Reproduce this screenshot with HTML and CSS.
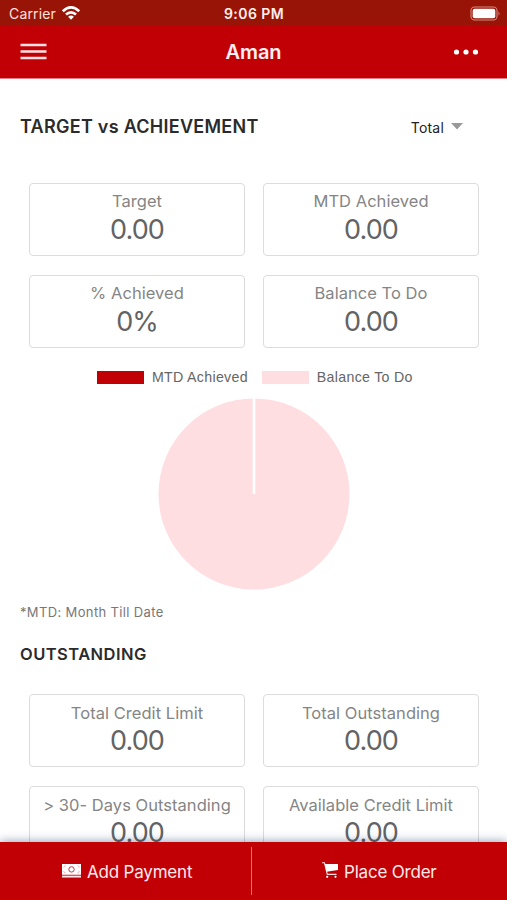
FILE: index.html
```html
<!DOCTYPE html>
<html lang="en">
<head>
<meta charset="utf-8">
<title>Aman</title>
<link rel="stylesheet" href="styles.css">
</head>
<body>
<div class="app">
  <div class="status">
    <div class="carrier"><span>Carrier</span>
      <svg class="wifi" width="20" height="16" viewBox="0 0 20 16" fill="none" stroke="#fff" stroke-width="2.7"><path d="M1.8 6.2Q10-1.6 18.2 6.2M5 9.6q5-4.5 10 0"/><path d="M10 14.8l-2.9-3q2.9-2.4 5.8 0z" fill="#fff" stroke="none"/></svg>
    </div>
    <span class="time">9:06 PM</span>
    <svg class="battery" width="31" height="15" viewBox="0 0 31 15"><rect x="1" y="1" width="26" height="13" rx="3.6" fill="none" stroke="#d58a80" stroke-width="1.1"/><rect x="2.7" y="2.7" width="22.6" height="9.6" rx="2" fill="#fff"/><path d="M28.5 5.2q2 2.3 0 4.6z" fill="#d58a80"/></svg>
  </div>
  <header class="header">
    <svg class="menu" width="27" height="17" viewBox="0 0 27 17" stroke="#ffdfe2" stroke-width="2.3"><path d="M.5 2h26M.5 8.5h26M.5 15h26"/></svg>
    <h1 class="title">Aman</h1>
    <svg class="more" width="26" height="6" viewBox="0 0 26 6" fill="#fff"><circle cx="3.5" cy="3" r="2.6"/><circle cx="13" cy="3" r="2.6"/><circle cx="22.5" cy="3" r="2.6"/></svg>
  </header>
  <main class="content">
    <div class="section-head">
      <h2 class="heading">TARGET vs ACHIEVEMENT</h2>
      <div class="select"><span>Total</span><svg width="12" height="7" viewBox="0 0 12 7"><path d="M0 0h12L6 6.5z" fill="#999"/></svg></div>
    </div>
    <div class="cards achievement">
      <div class="card"><span class="label">Target</span><span class="value">0.00</span></div>
      <div class="card"><span class="label">MTD Achieved</span><span class="value">0.00</span></div>
      <div class="card"><span class="label">% Achieved</span><span class="value">0%</span></div>
      <div class="card"><span class="label">Balance To Do</span><span class="value">0.00</span></div>
    </div>
    <div class="legend">
      <span class="key"><i class="swatch achieved"></i><span>MTD Achieved</span></span>
      <span class="key"><i class="swatch balance"></i><span>Balance To Do</span></span>
    </div>
    <svg class="pie" width="192" height="192" viewBox="0 0 192 192"><circle cx="96" cy="96" r="95.5" fill="#ffdee1"/><path d="M96 0v96" stroke="#fff" stroke-width="2.6"/></svg>
    <p class="note">*MTD: Month Till Date</p>
    <h2 class="heading outstanding">OUTSTANDING</h2>
    <div class="cards">
      <div class="card"><span class="label">Total Credit Limit</span><span class="value">0.00</span></div>
      <div class="card"><span class="label">Total Outstanding</span><span class="value">0.00</span></div>
      <div class="card"><span class="label">&gt; 30- Days Outstanding</span><span class="value">0.00</span></div>
      <div class="card"><span class="label">Available Credit Limit</span><span class="value">0.00</span></div>
    </div>
  </main>
  <footer class="footer">
    <div class="action pay">
      <svg width="19" height="14" viewBox="0 0 19 14"><rect width="19" height="10.8" fill="#fff"/><path d="M0 12.8h19" stroke="#fff" stroke-width="1.4"/><path d="M0 11.2h19" stroke="#f0a5a8" stroke-width=".8"/><circle cx="9.5" cy="5.4" r="2.7" fill="#fff" stroke="#cf3339" stroke-width="1"/><path d="M1.4 3.2Q3 3 3.2 1.4M17.6 3.2Q16 3 15.8 1.4M1.4 7.5Q3 7.7 3.2 9.2M17.6 7.5Q16 7.7 15.8 9.2" fill="none" stroke="#eb999c" stroke-width=".8"/></svg>
      <span>Add Payment</span>
    </div>
    <div class="action order">
      <svg width="17" height="17" viewBox="0 0 17 17"><path d="M0 .8h2.5l2.8 11.6H14.5" fill="none" stroke="#ffdfe0" stroke-width="1.1"/><path d="M2.8 2H16v6L4.5 9.8z" fill="#fff"/><circle cx="5.2" cy="14.8" r="1.1" fill="#fff"/><circle cx="13.5" cy="14.8" r="1.1" fill="#fff"/></svg>
      <span>Place Order</span>
    </div>
  </footer>
</div>
</body>
</html>
```
FILE: styles.css
```css
* { box-sizing: border-box; }
body { margin: 0; background: #fff; font-family: Inter, "Liberation Sans", sans-serif; }
h1, h2, p { margin: 0; }
svg { display: block; flex: none; }
span { white-space: nowrap; }
.app { width: 507px; height: 900px; display: flex; flex-direction: column; overflow: hidden; }

.status { height: 25px; flex: none; background: #981407; color: #fff; display: grid; grid-template-columns: 1fr auto 1fr; align-items: center; padding: 2px 6px 0 9px; }
.carrier { display: flex; align-items: center; gap: 5px; font-size: 14px; line-height: 20px; color: #ffe3dc; letter-spacing: .15px; }
.wifi { margin-top: -2px; }
.time { font-size: 14px; font-weight: 600; line-height: 20px; letter-spacing: .45px; color: #fff0ec; margin-left: -2px; }
.battery { justify-self: end; margin-top: -1px; }

.header { height: 54px; flex: none; background: #c10006; border-bottom: 1px solid #e58085; display: grid; grid-template-columns: 1fr auto 1fr; align-items: center; padding: 0 20px; color: #fff; }
.title { font-size: 20px; line-height: 26px; font-weight: 600; letter-spacing: -.1px; color: #ffeff0; }
.more { justify-self: end; margin: 1px 8px 0 0; }

.content { flex: 1; min-height: 0; overflow: hidden; display: flex; flex-direction: column; }
.section-head { flex: none; display: flex; align-items: center; justify-content: space-between; height: 24px; margin: 36px 44px 44px 20px; }
.heading { font-size: 18px; line-height: 24px; font-weight: 600; letter-spacing: .27px; color: #2b2b2b; white-space: nowrap; }
.select { display: flex; align-items: center; gap: 7px; font-size: 14px; line-height: 20px; letter-spacing: .2px; color: #222; padding-top: 2px; }
.select svg { margin-top: -4px; }
.cards { flex: none; display: grid; grid-template-columns: 216px 216px; gap: 19px 18px; padding-left: 29px; }
.card { height: 73px; border: 1.5px solid #dcdcdc; border-radius: 4px; display: flex; flex-direction: column; align-items: center; padding-top: 7px; }
.label { font-size: 16.5px; line-height: 22px; letter-spacing: .04px; color: #858585; }
.value { font-size: 27px; line-height: 34px; letter-spacing: -.9px; color: #636363; }
.achievement .card { padding-top: 6px; }
.achievement .value { line-height: 36px; }

.legend { flex: none; display: flex; gap: 14px; margin: 20px 0 0 97px; }
.key { display: flex; align-items: center; gap: 8px; font: 14.2px/18px "Liberation Sans", sans-serif; letter-spacing: .3px; color: #666; }
.swatch { width: 47px; height: 13px; }
.achieved { background: #c10006; }
.balance { background: #ffdee1; }
.pie { margin: 12px 0 0 158px; }
.note { flex: none; margin: 13px 0 0 20px; font-size: 13px; line-height: 18px; letter-spacing: .36px; color: #777; }
.outstanding { font-size: 16.5px; letter-spacing: .45px; margin: 21px 0 28px 20px; }

.footer { position: relative; height: 58px; flex: none; display: grid; grid-template-columns: 252px 255px; align-items: center; background: #c10006; color: #ffeaeb; box-shadow: 0 -1px 9px rgba(30, 60, 110, .45); }
.action { display: flex; align-items: center; height: 48px; font-size: 17px; line-height: 22px; letter-spacing: -.2px; }
.action svg { margin-top: -1px; }
.pay { padding-left: 62px; gap: 6px; border-right: 1px solid #df7478; }
.order { padding-left: 70px; gap: 5px; }
.action span { margin-top: 1px; }
```
